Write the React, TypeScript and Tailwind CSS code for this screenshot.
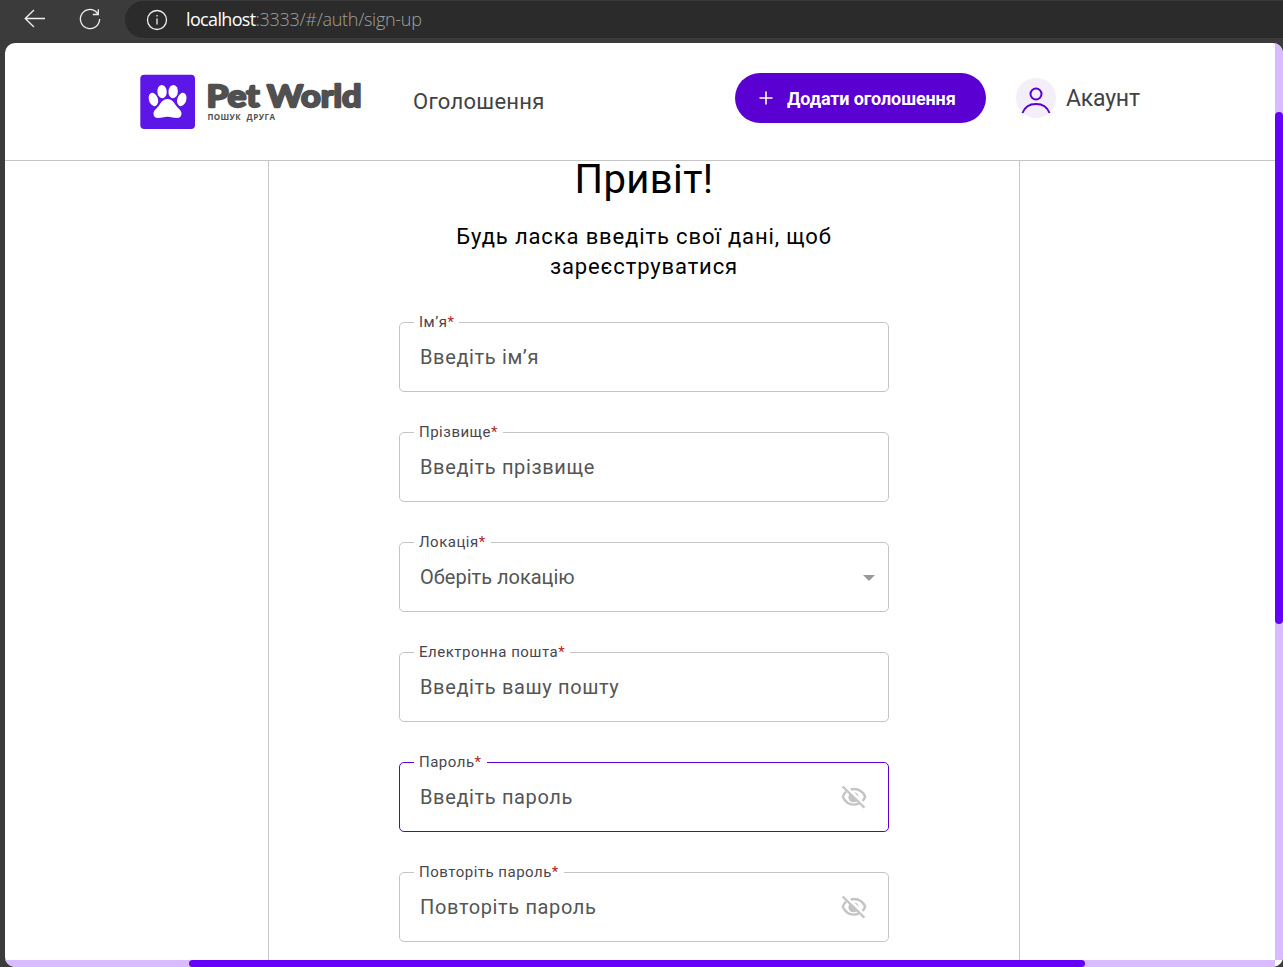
import React from "react";

type Field = {
  label: string;
  placeholder: string;
  kind?: "select" | "password";
  active?: boolean;
  tight?: boolean;
};

const fields: Field[] = [
  { label: "Ім’я", placeholder: "Введіть ім’я" },
  { label: "Прізвище", placeholder: "Введіть прізвище" },
  { label: "Локація", placeholder: "Оберіть локацію", kind: "select", tight: true },
  { label: "Електронна пошта", placeholder: "Введіть вашу пошту" },
  { label: "Пароль", placeholder: "Введіть пароль", kind: "password", active: true },
  { label: "Повторіть пароль", placeholder: "Повторіть пароль", kind: "password" },
];

function EyeOff() {
  return (
    <svg className="mr-5 h-7 w-7" viewBox="0 0 28 28" fill="none" stroke="#c4c4c4" strokeWidth="2.4">
      <path d="M10.8 6.5C11.800 6.200 12.900 6 14 6c5 0 9.200 3 11.200 7.800-.7 1.700-1.500 3-2.700 4.200" />
      <path d="M6 8.600C4.500 10 3.500 11.800 2.800 13.800c2 4.700 6.200 7.800 11.200 7.800 1.700 0 3.200-.3 4.600-.9" />
      <path d="M9.800 10.800a4.900 4.900 0 0 0 7.200 7z" fill="#c4c4c4" stroke="none" />
      <path d="M14.300 9.400a4.500 4.500 0 0 1 4.200 4.300z" fill="#c4c4c4" stroke="none" />
      <path d="M2.600 3.500L24.400 24.700" />
    </svg>
  );
}

function FormField({ field }: { field: Field }) {
  return (
    <div
      className={`relative flex h-[70px] w-[490px] items-center justify-between rounded-[5px] border ${
        field.active ? "border-[#5b00d3]" : "border-[#c4c4c4]"
      }`}
    >
      <label className="absolute -top-[11px] left-[14px] bg-white px-[5px] text-[15px] leading-5 tracking-[0.5px] text-[#49454f]">
        {field.label}
        <span className="text-[#b3261e]">*</span>
      </label>
      <span
        className={`pl-5 text-[20px] leading-6 text-[#555555] ${field.tight ? "tracking-normal" : "tracking-[0.63px]"}`}
      >
        {field.placeholder}
      </span>
      {field.kind === "select" && (
        <svg className="mr-[13px] mt-px h-[6px] w-[12px]" viewBox="0 0 12 6">
          <path d="M0 0h12L6 6z" fill="#999999" />
        </svg>
      )}
      {field.kind === "password" && <EyeOff />}
    </div>
  );
}

function BrowserBar() {
  return (
    <div className="flex h-[43px] items-start bg-[#3b3b3b]">
      <svg className="ml-6 mt-2 h-[22px] w-[22px]" viewBox="0 0 22 22" fill="none" stroke="#f0f0f0" strokeWidth="1.3">
        <path d="M21 10.500H1.500M10 2L1.200 10.500 10 19" />
      </svg>
      <svg className="ml-[33px] mt-2 h-[22px] w-[22px]" viewBox="0 0 22 22" fill="none" stroke="#f0f0f0" strokeWidth="1.3">
        <path d="M20.600 11A9.600 9.600 0 1 1 16.500 3.200L19.200 6M19.300 1.300v5.200h-5.500" />
      </svg>
      <div className="ml-[24px] mt-px flex h-[37px] flex-1 items-center rounded-l-full bg-[#2b2b2b]">
        <svg className="ml-[21px] h-[22px] w-[22px]" viewBox="0 0 22 22" fill="none" stroke="#f0f0f0" strokeWidth="1.3">
          <circle cx="11" cy="11" r="9.500" />
          <path d="M11 9.500v6M11 6v1.600" />
        </svg>
        <span className="ml-[18px] font-['Open_Sans','Noto_Sans',sans-serif] text-[18px] text-[#a0a0a0]">
          <span className="tracking-[-0.65px] text-white">localhost</span>
          <span className="font-light tracking-[-0.29px]">:3333/#/auth/sign-up</span>
        </span>
      </div>
    </div>
  );
}

function Logo() {
  return (
    <svg className="ml-[135px] h-[56px] w-[224px]" viewBox="0 0 224 56">
      <rect x="0.300" y="0.700" width="54.700" height="54.300" rx="4" fill="#5c16e8" />
      <g fill="#ffffff">
        <ellipse cx="13.400" cy="25.500" rx="4.500" ry="6.800" transform="rotate(-18 13.400 25.500)" />
        <ellipse cx="22" cy="17.600" rx="4.700" ry="6.700" transform="rotate(-5 22 17.600)" />
        <ellipse cx="33.200" cy="17.600" rx="4.700" ry="6.700" transform="rotate(5 33.200 17.600)" />
        <ellipse cx="41.800" cy="25.500" rx="4.500" ry="6.800" transform="rotate(18 41.800 25.500)" />
        <path d="M27.500 25c-4 0-6.500 3.200-8.300 6.300-1.800 3-5.700 4.500-5.700 8.500 0 2.700 1.900 4.300 4.500 4.300 3.500 0 5.700-1.300 9.500-1.300s6 1.300 9.500 1.300c2.600 0 4.500-1.600 4.500-4.300 0-4-3.900-5.500-5.700-8.500C34 28.200 31.500 25 27.500 25z" />
      </g>
      <g
        fill="#505050"
        stroke="#505050"
        strokeWidth="2.300"
        strokeLinejoin="round"
        fontFamily="Lato, sans-serif"
        fontSize="30.500"
        fontWeight="700"
      >
        <text x="66.500" y="33.300" textLength="53" lengthAdjust="spacingAndGlyphs">Pet</text>
        <text x="127" y="33.300" textLength="94.500" lengthAdjust="spacingAndGlyphs">World</text>
      </g>
      <g fill="#505050" fontFamily="Open Sans, sans-serif" fontSize="8" fontWeight="700">
        <text x="67.500" y="46.300" textLength="33" lengthAdjust="spacing">ПОШУК</text>
        <text x="106.500" y="46.300" textLength="28.500" lengthAdjust="spacing">ДРУГА</text>
      </g>
    </svg>
  );
}

function Header() {
  return (
    <header className="flex h-[118px] shrink-0 items-center border-b border-[#c4c4c4]">
      <Logo />
      <a className="ml-[49px] text-[22px] leading-7 tracking-[0.3px] text-[#424242]">Оголошення</a>
      <button className="ml-auto mb-[7px] flex h-[50px] w-[251px] items-center rounded-full bg-[#5b00d3] pl-6 text-[18px] font-bold text-white">
        <svg className="mr-[14px] h-[14px] w-[14px]" viewBox="0 0 14 14" stroke="#ffffff" strokeWidth="1.600">
          <path d="M7 0.500v13M0.500 7h13" />
        </svg>
        <span className="whitespace-nowrap tracking-[-0.12px]">Додати оголошення</span>
      </button>
      <div className="mb-[7px] ml-[30px] mr-[135px] flex w-[124px] items-center">
        <svg className="h-10 w-10 shrink-0" viewBox="0 0 40 40" fill="none" stroke="#5b00d3" strokeWidth="2">
          <circle cx="20" cy="20" r="20" fill="#f3eef8" stroke="none" />
          <circle cx="20" cy="16" r="5.500" />
          <path d="M6.500 35C8.500 29.500 13.500 26 20 26s11.500 3.500 13.500 9" />
        </svg>
        <span className="ml-[10px] mt-[2px] text-[23px] leading-7 tracking-[-0.2px] text-[#424242]">Акаунт</span>
      </div>
    </header>
  );
}

export default function App() {
  return (
    <div className="flex h-[967px] w-[1283px] flex-col overflow-hidden bg-[#3b3b3b] font-[Roboto,sans-serif]">
      <BrowserBar />
      <div className="ml-[5px] flex h-[924px] w-[1278px] flex-col overflow-hidden rounded-[10px] bg-white">
        <div className="flex h-[917px]">
          <div className="flex w-[1270px] flex-col">
            <Header />
            <main className="ml-[263px] flex w-[752px] flex-1 flex-col items-center border-x border-[#c8c8cc]">
              <h1 className="-mt-1 text-[40px] leading-[46px] tracking-[0.4px] text-black">Привіт!</h1>
              <p className="mt-[19px] w-[400px] text-center text-[22px] leading-[30px] tracking-[0.87px] text-black">
                Будь ласка введіть свої дані, щоб зареєструватися
              </p>
              <form className="mt-10 flex flex-col gap-10">
                {fields.map((field) => (
                  <FormField key={field.label} field={field} />
                ))}
              </form>
            </main>
          </div>
          <div className="w-2 bg-[#d9bcff] pt-[69px]">
            <div className="h-[512px] rounded-full bg-[#6500fa]" />
          </div>
        </div>
        <div className="h-[7px] w-[1270px] bg-[#d9bcff] pl-[184px]">
          <div className="h-[7px] w-[896px] rounded-full bg-[#6500fa]" />
        </div>
      </div>
    </div>
  );
}
